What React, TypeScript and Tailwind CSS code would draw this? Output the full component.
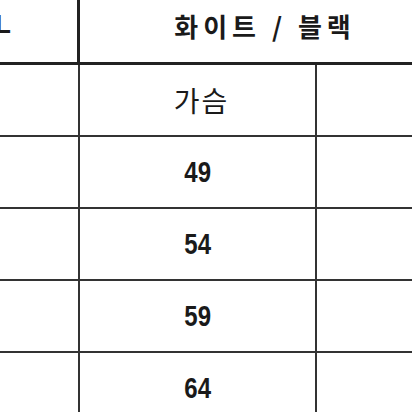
const rows = [
  { label: "가슴", kind: "ko" },
  { label: "49", kind: "num" },
  { label: "54", kind: "num" },
  { label: "59", kind: "num" },
  { label: "64", kind: "num" },
];

export default function App() {
  return (
    <div className="w-[412px] h-[412px] overflow-hidden bg-white text-[#1a1a1a]">
      <div className="w-[450px] flex flex-col">
        <div className="flex h-[65px] border-b-[3px] border-[#222]">
          <div className="w-[80px] shrink-0 border-r-[3px] border-[#222] flex items-center pb-[14px]">
            <span className="-ml-[5px] text-[26px] font-bold leading-none text-[#1a1a1a] font-['Liberation_Sans',sans-serif]">
              L
            </span>
          </div>
          <div className="flex-1 flex items-center justify-center pb-[12px] text-[26px] font-bold tracking-[5px] font-['Noto_Sans_CJK_KR',sans-serif]">
            화이트 / 블랙
          </div>
        </div>
        {rows.map((row) => (
          <div key={row.label} className="flex h-[72px] border-b-2 border-[#333]">
            <div className="w-[80px] shrink-0 border-r-2 border-[#333]" />
            <div className="w-[237px] shrink-0 border-r-2 border-[#333] flex items-center justify-center">
              {row.kind === "ko" ? (
                <span className="ml-[8px] text-[28px] tracking-[2px] leading-none font-['Noto_Sans_CJK_KR',sans-serif]">
                  {row.label}
                </span>
              ) : (
                <span className="inline-block scale-x-[0.8] text-[30px] font-bold leading-none font-['Liberation_Sans',sans-serif]">
                  {row.label}
                </span>
              )}
            </div>
            <div className="flex-1" />
          </div>
        ))}
      </div>
    </div>
  );
}
